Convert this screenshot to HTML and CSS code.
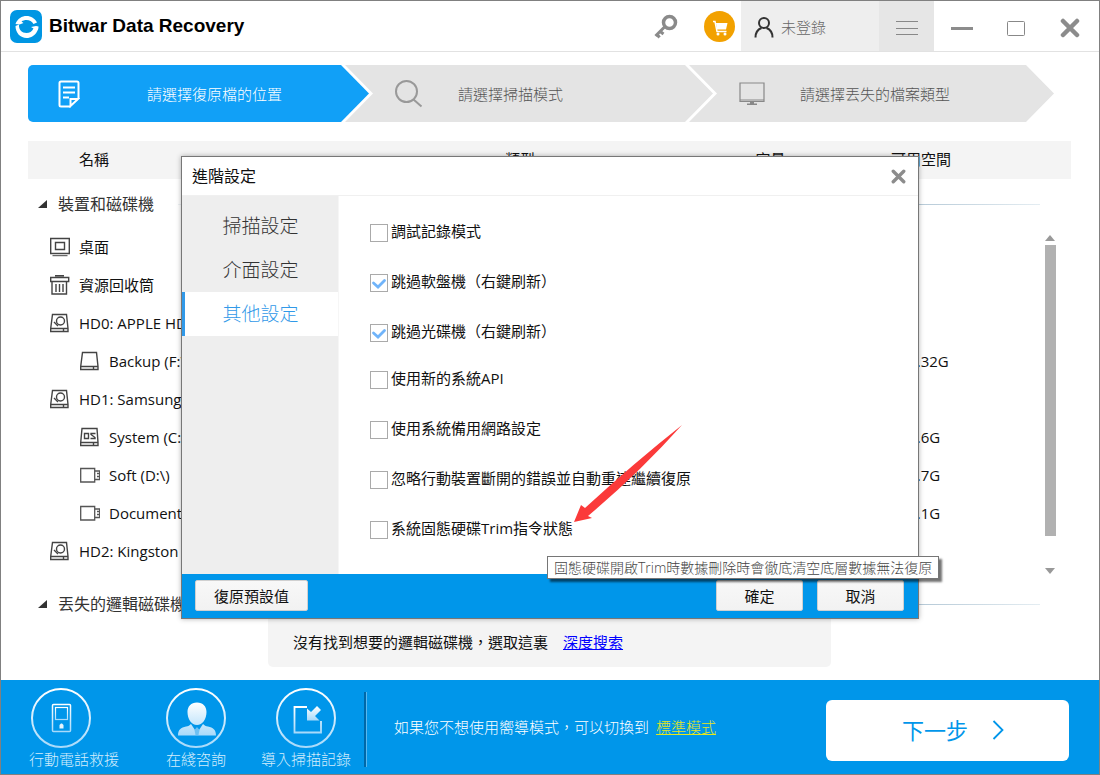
FILE: index.html
```html
<!DOCTYPE html>
<html lang="zh-Hant">
<head>
<meta charset="utf-8">
<meta name="viewport" content="width=device-width, initial-scale=1">
<title>Bitwar Data Recovery</title>
<link rel="stylesheet" href="styles.css">
</head>
<body>
<svg class="defs" aria-hidden="true">
  <defs>
    <linearGradient id="fade" x1="0" y1="0" x2="0" y2="1"><stop offset="0" stop-color="#fff"/><stop offset="1" stop-color="#a9dafa"/></linearGradient>
    <symbol id="disk" viewBox="0 0 20 20"><path d="M2.500 1.500h14l1.500 14v3H.700v-3zM.700 15.500H18M13.500 15.500v3" fill="none" stroke="#444" stroke-width="1.400"/></symbol>
    <symbol id="hdd" viewBox="0 0 20 20"><path d="M2.500 1.500h14l1.500 14v3H.700v-3zM.700 15.500H18M13.500 15.500v3M4 9l4 4" fill="none" stroke="#444" stroke-width="1.400"/><circle cx="10.500" cy="8" r="4" fill="none" stroke="#444" stroke-width="1.400"/></symbol>
    <symbol id="osdisk" viewBox="0 0 20 20"><path d="M2 1.500h15l1 14v3H.700v-3zM.700 15.500H18M13.500 15.500v3M4.500 6.500h4v5h-4zM15.500 6.500h-4.500v1l4 3v1h-4.500" fill="none" stroke="#444" stroke-width="1.400"/></symbol>
    <symbol id="usb" viewBox="0 0 20 20"><path d="M.7 3.500h14v13.500h-14zM14.700 6h5v8.500h-5M17 8.500h2.500M17 11.500h2.500" fill="none" stroke="#555" stroke-width="1.300"/></symbol>
    <symbol id="cross" viewBox="0 0 20 20"><path d="M3 3l14 14M17 3L3 17" fill="none" stroke="#8c8c8c" stroke-width="4.500" stroke-linecap="round"/></symbol>
  </defs>
</svg>

<header class="titlebar">
  <svg class="logo" viewBox="0 0 32 33"><rect width="32" height="33" rx="7" fill="#0096e3"/><path d="M5.500 14C7.500 8.500 12 6 16.500 6c4.500 0 8.500 2.500 10.500 6.500l-3.500 1.500c-1.500-2.500-4-4-7-4-2 0-3.500.5-5 1.500l2 1.500-4 1.500z" fill="#fff"/><path d="M5.500 16l3.500-1.500c-.5 5 3 8.500 7.500 8.500 3 0 5.500-1.500 7-4.500l-2.500-1.500 5-1 2.500.5c0 2-.5 3.500-1.500 5C25 25.500 21 28 16.500 28 10.500 28 5.500 23 5.500 16z" fill="#fff"/></svg>
  <h1 class="title">Bitwar Data Recovery</h1>
  <button class="tool key" aria-label="註冊"><svg viewBox="0 0 24 25"><circle cx="15.500" cy="8.500" r="6" fill="none" stroke="#8a8a8a" stroke-width="3.500"/><path d="M11 12.500L1.500 22M2.500 19.500l3 4M5.500 17l4 3" fill="none" stroke="#8a8a8a" stroke-width="3"/></svg></button>
  <button class="tool cart" aria-label="購買"><svg viewBox="0 0 31 31"><circle cx="15.500" cy="15.500" r="15.500" fill="#f2a100"/><path d="M9 10.500h2l2 10h9.500" fill="none" stroke="#fff" stroke-width="1.500"/><path d="M12 12h11.500l-1.500 6.500h-9z" fill="#fff"/><circle cx="14" cy="23" r="1.500" fill="#fff"/><circle cx="21" cy="23" r="1.500" fill="#fff"/></svg></button>
  <button class="tool user"><svg viewBox="0 0 20 21"><circle cx="10" cy="6" r="5" fill="none" stroke="#333" stroke-width="2"/><path d="M1.500 20.500c0-5 2-8 6-9.500M18.500 20.500c0-5-2-8-6-9.500" fill="none" stroke="#333" stroke-width="2"/></svg>未登錄</button>
  <button class="tool menu" aria-label="選單"><svg viewBox="0 0 22 16"><path d="M0 1.500h22M0 8.500h22M0 14.500h22" stroke="#888" stroke-width="1"/></svg></button>
  <button class="tool win" aria-label="最小化"><svg viewBox="0 0 22 20"><path d="M0 10.500h22" stroke="#8c8c8c" stroke-width="3"/></svg></button>
  <button class="tool win" aria-label="最大化"><svg viewBox="0 0 22 20"><rect x="2.500" y="3.500" width="17" height="14" rx="1" fill="none" stroke="#888"/></svg></button>
  <button class="tool win" aria-label="關閉"><svg viewBox="0 0 20 20"><use href="#cross"/></svg></button>
</header>

<main class="main">
  <ol class="steps">
    <li class="step step-first"><svg viewBox="0 0 22 28"><path d="M13 26.500H3Q1.500 26.500 1.500 25V3Q1.500 1.500 3 1.500H19Q20.500 1.500 20.500 3V18M5 7.500h12M5 12.500h12M5 17.500h6M12.500 26V19h7.500z" fill="none" stroke="#fff" stroke-width="2"/></svg>請選擇復原檔的位置</li>
    <li class="step step-mid"><svg viewBox="0 0 28 28"><circle cx="11.500" cy="11.500" r="10.500" fill="none" stroke="#999" stroke-width="2"/><path d="M18.500 19.500l8 7" stroke="#999" stroke-width="2"/></svg>請選擇掃描模式</li>
    <li class="step step-last"><svg viewBox="0 0 26 24"><path d="M1 1h24v18.500H1zM1 18h24" fill="none" stroke="#888" stroke-width="1.200"/><path d="M11 20h4v1.500h3v1.500H8v-1.500h3z" fill="#888"/></svg>請選擇丟失的檔案類型</li>
  </ol>

  <table class="devices">
    <colgroup><col class="c-name"><col class="c-type"><col class="c-size"><col class="c-free"><col class="c-bar"></colgroup>
    <thead>
      <tr><th class="th-name">名稱</th><th>類型</th><th>容量</th><th>可用空間</th><th></th></tr>
    </thead>
    <tbody>
      <tr class="group"><td colspan="5"><div class="group-line"><svg viewBox="0 0 10 10"><path d="M9 1v8H0z" fill="#333"/></svg>裝置和磁碟機<hr></div></td></tr>
      <tr><td><div class="dev"><svg viewBox="0 0 20 20"><path d="M.7 1.500h18.600v15H.7zM5.500 5.500h9v7h-9z" fill="none" stroke="#444" stroke-width="1.400"/><path d="M2.500 18.700h15" stroke="#444"/></svg>桌面</div></td><td></td><td></td><td></td>
        <td rowspan="9" class="bar-cell"><div class="bar"><svg viewBox="0 0 10 6"><path d="M5 0l5 6H0z" fill="#999"/></svg><span class="thumb"></span><svg viewBox="0 0 10 6"><path d="M0 0h10L5 6z" fill="#999"/></svg></div></td></tr>
      <tr><td><div class="dev"><svg viewBox="0 0 20 20"><path d="M.7 2.500h18v4h-18zM2 6.500v12.500h14.500V6.500M6 9v8M9.500 9v8M13 9v8M5 .8h9" fill="none" stroke="#444" stroke-width="1.400"/></svg>資源回收筒</div></td><td></td><td></td><td></td></tr>
      <tr><td><div class="dev"><svg><use href="#hdd"/></svg>HD0: APPLE HDD</div></td><td></td><td></td><td></td></tr>
      <tr><td><div class="dev sub"><svg><use href="#disk"/></svg>Backup (F:\)</div></td><td></td><td></td><td>129.32G</td></tr>
      <tr><td><div class="dev"><svg><use href="#hdd"/></svg>HD1: Samsung</div></td><td></td><td></td><td></td></tr>
      <tr><td><div class="dev sub"><svg><use href="#osdisk"/></svg>System (C:\)</div></td><td></td><td></td><td>100.6G</td></tr>
      <tr><td><div class="dev sub"><svg><use href="#usb"/></svg>Soft (D:\)</div></td><td></td><td></td><td>100.7G</td></tr>
      <tr><td><div class="dev sub"><svg><use href="#usb"/></svg>Document</div></td><td></td><td></td><td>100.1G</td></tr>
      <tr><td><div class="dev"><svg><use href="#hdd"/></svg>HD2: Kingston</div></td><td></td><td></td><td></td></tr>
      <tr class="group group-lost"><td colspan="5"><div class="group-line"><svg viewBox="0 0 10 10"><path d="M9 1v8H0z" fill="#333"/></svg>丟失的邏輯磁碟機<hr></div></td></tr>
    </tbody>
  </table>

  <p class="deep">沒有找到想要的邏輯磁碟機，選取這裏<a href="#deep">深度搜索</a></p>
</main>

<footer class="footer">
  <button class="act act-phone"><svg viewBox="0 0 60 60"><circle cx="30" cy="30" r="29" fill="none" stroke="url(#fade)" stroke-width="2"/><rect x="21.500" y="16.500" width="18" height="27" rx="1" fill="none" stroke="url(#fade)" stroke-width="1.500"/><rect x="24.500" y="19.500" width="12" height="12" fill="none" stroke="url(#fade)" stroke-width="1.200"/><path d="M28.500 37l1.500-1.500h1l1.500 1.500v3.500h-4z" fill="#e4f4fd"/></svg>行動電話救援</button>
  <button class="act act-chat"><svg viewBox="0 0 60 60"><circle cx="30" cy="30" r="29" fill="none" stroke="url(#fade)" stroke-width="2"/><path d="M31 14.500c6 0 9.500 4 9.500 9.500 0 7-4 13-9.500 13s-9.500-6-9.500-13c0-5.500 3.500-9.500 9.500-9.500zM12 47.500c0-6 3-8 8-9 2 0 4-1.500 5-2.500l4 6 2-2 2 2 4-6c1 1 3 2.500 5 2.500 5 1 8 3 8 9z" fill="url(#fade)"/><path d="M31 39l-2.500 3 1 5h3l1-5z" fill="#6dc0f2"/></svg>在綫咨詢</button>
  <button class="act act-import"><svg viewBox="0 0 60 60"><circle cx="30" cy="30" r="29" fill="none" stroke="url(#fade)" stroke-width="2"/><path d="M31 19H18.500v25.500H45V33" fill="none" stroke="url(#fade)" stroke-width="1.800"/><path d="M31 20.500v12h12.500l-4.500-4.500 6-6-4-4-6 6z" fill="url(#fade)"/></svg>導入掃描記錄</button>
  <span class="divider"></span>
  <p class="switch">如果您不想使用嚮導模式，可以切換到<a href="#standard">標準模式</a></p>
  <button class="next">下一步<svg viewBox="0 0 12 20"><path d="M1.500 1l9 9-9 9" fill="none" stroke="#0096ea" stroke-width="1.800"/></svg></button>
</footer>

<div class="overlay">
  <section class="dialog" role="dialog" aria-labelledby="dlg-title">
    <header class="dlg-head"><h2 id="dlg-title">進階設定</h2><button class="dlg-close" aria-label="關閉"><svg><use href="#cross"/></svg></button></header>
    <div class="dlg-body">
      <nav class="tabs">
        <button class="tab">掃描設定</button>
        <button class="tab">介面設定</button>
        <button class="tab active">其他設定</button>
      </nav>
      <form class="options">
        <div class="option-set">
          <label><input type="checkbox">調試記錄模式</label>
          <label><input type="checkbox" checked>跳過軟盤機（右鍵刷新）</label>
          <label><input type="checkbox" checked>跳過光碟機（右鍵刷新）</label>
        </div>
        <div class="option-set">
          <label><input type="checkbox">使用新的系統API</label>
          <label><input type="checkbox">使用系統備用網路設定</label>
          <label><input type="checkbox">忽略行動裝置斷開的錯誤並自動重連繼續復原</label>
          <label><input type="checkbox">系統固態硬碟Trim指令狀態</label>
        </div>
      </form>
    </div>
    <footer class="dlg-foot">
      <button class="btn btn-reset">復原預設值</button>
      <button class="btn">確定</button>
      <button class="btn">取消</button>
    </footer>
    <svg class="pointer" viewBox="0 0 110 98" aria-hidden="true"><path d="M0 97L7 80l4 3Q60 38 108 0 65 48 14 91l4 2z" fill="#fb3a3a"/></svg>
    <div class="tooltip" role="tooltip">固態硬碟開啟Trim時數據刪除時會徹底清空底層數據無法復原</div>
  </section>
</div>
</body>
</html>
```

FILE: styles.css
```css
* { box-sizing: border-box; }

body {
  position: relative;
  display: flex;
  flex-direction: column;
  min-height: 100vh;
  margin: 0;
  border: 1px solid #808080;
  background: #fff;
  color: #111;
  font: 400 15px/20px "Open Sans", "Noto Sans CJK TC", sans-serif;
}

button {
  padding: 0;
  border: 0;
  background: none;
  color: inherit;
  font: inherit;
}

svg { display: block; flex: none; }
.defs { position: absolute; width: 0; height: 0; }

/* Title bar */
.titlebar {
  display: flex;
  align-items: stretch;
  height: 51px;
  padding-left: 9px;
  padding-right: 18px;
  border-bottom: 1px solid #e2e2e2;
}
.logo { width: 32px; height: 33px; align-self: center; }
.title {
  flex: 1;
  align-self: center;
  margin: 0 0 0 7px;
  color: #000;
  font: bold 19px/24px "Liberation Sans", Arial, sans-serif;
}
.tool { display: flex; align-items: center; }
.key svg { width: 24px; height: 25px; }
.cart { margin: 0 6px 0 26px; }
.cart svg { width: 31px; height: 31px; }
.user {
  gap: 7px;
  width: 138px;
  padding: 2px 0 0 13px;
  background: #eee;
  color: #666;
  font-weight: 300;
}
.user svg { width: 20px; height: 21px; }
.menu {
  justify-content: center;
  width: 55px;
  padding-top: 3px;
  margin-right: 17px;
  background: #e6e6e6;
}
.menu svg { width: 22px; height: 16px; }
.win { margin-top: 4px; margin-left: 32px; }
.menu + .win { margin-left: 0; }
.win svg { width: 22px; height: 20px; }

/* Wizard steps */
.main { flex: 1; padding: 13px 28px 13px 27px; }
.steps {
  display: flex;
  margin: 0 17px 19px 0;
  padding: 0;
  list-style: none;
}
.step {
  display: flex;
  align-items: center;
  gap: 35px;
  height: 57px;
  background: #e4e4e4;
  color: #555;
  font-weight: 300;
}
.step-first {
  flex: 311;
  gap: 67px;
  padding-left: 30px;
  border-radius: 5px 0 0 5px;
  background: #11a0f7;
  color: #fff;
  clip-path: polygon(0 0, calc(100% - 28px) 0, 100% 50%, calc(100% - 28px) 100%, 0 100%);
}
.step-mid, .step-last {
  margin-left: -24px;
  padding-left: 50px;
  clip-path: polygon(0 0, calc(100% - 28px) 0, 100% 50%, calc(100% - 28px) 100%, 0 100%, 28px 50%);
}
.step-mid { flex: 318; }
.step-last { flex: 315; }
.step-first svg { width: 22px; height: 28px; }
.step-mid svg { width: 28px; height: 28px; }
.step-last svg { width: 26px; height: 24px; }

/* Device table */
.devices {
  width: 100%;
  border-collapse: collapse;
  table-layout: fixed;
}
.c-type { width: 24%; }
.c-size { width: 13%; }
.c-free { width: 151px; }
.c-bar { width: 29px; }
.devices th {
  height: 38px;
  padding: 0 0 2px;
  background: #f4f4f4;
  font-weight: inherit;
  text-align: left;
}
.devices .th-name { padding-left: 51px; }
.devices td { height: 38px; padding: 0; }
.devices .group td { height: 49px; }
.devices .group-lost td { height: 45px; padding-top: 22px; }
.group-line {
  display: flex;
  align-items: center;
  padding: 0 31px 0 10px;
  color: #333;
  font-size: 16px;
}
.group-line svg { width: 10px; height: 10px; margin-right: 10px; }
.group-line hr {
  flex: 1;
  height: 1px;
  margin: 1px 0 0 24px;
  border: 0;
  background: linear-gradient(90deg, #eef2f5, #b4c8d6 50%, #b4c8d6 85%, #e4edf2);
}
.dev {
  display: flex;
  align-items: center;
  gap: 9px;
  padding-left: 22px;
}
.dev.sub { padding-left: 52px; }
.dev svg { width: 20px; height: 20px; }
.devices .bar-cell { vertical-align: top; }
.bar {
  display: flex;
  flex-direction: column;
  align-items: center;
  width: 16px;
  height: 346px;
  margin-bottom: -4px;
  padding-top: 7px;
}
.bar svg { width: 10px; height: 6px; }
.thumb {
  flex: 1;
  width: 11px;
  margin: 4px 0 32px;
  background: #b1b1b1;
}
.deep {
  display: flex;
  align-items: center;
  gap: 15px;
  width: 100%;
  max-width: 563px;
  height: 52px;
  margin: 0 auto;
  padding: 2px 25px 0;
  border-radius: 5px;
  background: #f4f4f4;
}
.deep a { color: #00f; }

/* Bottom bar */
.footer {
  display: flex;
  align-items: center;
  height: 94px;
  padding: 0 30px 0 28px;
  background: #0096ea;
  color: #fff;
  font-weight: 300;
}
.act {
  display: flex;
  flex-direction: column;
  align-items: center;
  gap: 1px;
  width: 90px;
  padding-top: 2px;
  color: #d4edfc;
}
.act svg { width: 60px; height: 60px; }
.act-phone svg { align-self: flex-start; margin-left: 2px; }
.act-chat { width: 60px; margin: 0 35px 0 47px; }
.divider {
  width: 3px;
  height: 75px;
  margin: 4px 0 0 13px;
  border-left: 2px solid #0068a8;
  border-right: 1px solid #58b8f0;
}
.switch { display: flex; flex: 1; gap: 7px; margin: 0 0 0 27px; }
.switch a { color: #e6e61a; }
.next {
  display: flex;
  align-items: center;
  justify-content: center;
  gap: 24px;
  width: 243px;
  height: 61px;
  margin-top: 6px;
  padding-left: 11px;
  border-radius: 6px;
  background: #fff;
  color: #0096ea;
  font-size: 22px;
  font-weight: 400;
}
.next svg { width: 12px; height: 20px; }

/* Settings dialog */
.overlay {
  position: absolute;
  inset: 0;
  display: grid;
  place-items: center;
}
.dialog {
  position: relative;
  width: 100%;
  max-width: 738px;
  border: 1px solid #777;
  background: #fff;
  box-shadow: 0 0 5px rgba(0, 0, 0, .3);
}
.dlg-head {
  display: flex;
  align-items: center;
  justify-content: space-between;
  height: 39px;
  padding: 0 12px 0 10px;
  border-bottom: 1px solid #f0f0f0;
}
.dlg-head h2 { margin: 0; font-size: 16px; font-weight: inherit; }
.dlg-close svg { width: 15px; height: 15px; }
.dlg-body { display: flex; }
.tabs {
  width: 157px;
  padding-top: 8px;
  border-right: 1px solid #f6f6f6;
  background: #eee;
}
.tab {
  display: block;
  width: 100%;
  height: 44px;
  padding-right: 2px;
  border-left: 3px solid transparent;
  color: #333;
  font-size: 19px;
  font-weight: 300;
}
.tab.active {
  border-left-color: #3199e8;
  background: #fff;
  color: #3199e8;
}
.options {
  display: grid;
  gap: 29px;
  padding: 28px 31px 35px;
}
.option-set { display: grid; gap: 32px; }
.option-set label {
  display: flex;
  align-items: flex-start;
  gap: 3px;
  height: 18px;
  line-height: 14px;
}
.option-set input {
  appearance: none;
  width: 18px;
  height: 18px;
  margin: 0;
  border: 1px solid #aaa;
  background: #fff;
}
.option-set input:checked {
  background: #fff url("data:image/svg+xml,%3Csvg xmlns='http://www.w3.org/2000/svg' viewBox='0 0 16 16'%3E%3Cpath d='M2.500 8l4.500 4 6.500-6.500' fill='none' stroke='%2370b4fa' stroke-width='2.800' stroke-linecap='round'/%3E%3C/svg%3E");
}
.dlg-foot {
  display: flex;
  align-items: flex-start;
  gap: 14px;
  height: 44px;
  padding: 6px 14px 0 13px;
  background: #0096ea;
}
.btn {
  width: 87px;
  height: 31px;
  border: 1px solid #d0d0d0;
  border-radius: 2px;
  background: linear-gradient(#f8f8f8, #f2f2f2);
}
.btn-reset { width: 113px; margin-right: auto; }
.pointer {
  position: absolute;
  top: 268px;
  left: 392px;
  width: 110px;
  height: 98px;
}
.tooltip {
  position: absolute;
  top: 399px;
  left: 365px;
  padding: 0 6px;
  border: 1px solid #767676;
  background: #fff;
  box-shadow: 3px 3px 2px rgba(0, 0, 0, .55);
  color: #444;
  font-size: 14px;
  font-weight: 300;
  line-height: 21px;
  white-space: nowrap;
}
```
